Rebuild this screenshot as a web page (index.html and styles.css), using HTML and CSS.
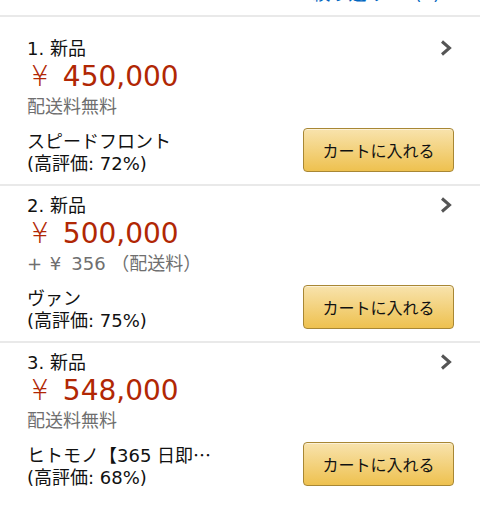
FILE: index.html
```html
<!DOCTYPE html>
<html lang="ja">
<head>
<meta charset="utf-8">
<title>出品一覧</title>
<link rel="stylesheet" href="styles.css">
</head>
<body>
<div class="page">
  <div class="header">
    <div class="filter"><span class="filter-label">絞り込み</span><span class="filter-count">(1)</span></div>
  </div>
  <ul class="offers">
    <li class="offer">
      <div class="offer-head">
        <span class="title">1. 新品</span>
        <svg class="chevron" width="12" height="18" viewBox="0 0 12 18"><polyline points="2,2.5 9.5,9 2,15.5" fill="none" stroke="#555" stroke-width="3"/></svg>
      </div>
      <div class="price"><span class="yen">¥</span>450,000</div>
      <div class="ship">配送料無料</div>
      <div class="seller-row">
        <div class="seller">
          <div class="seller-name">スピードフロント</div>
          <div class="rating">(高評価: 72%)</div>
        </div>
        <button class="cart">カートに入れる</button>
      </div>
    </li>
    <li class="offer">
      <div class="offer-head">
        <span class="title">2. 新品</span>
        <svg class="chevron" width="12" height="18" viewBox="0 0 12 18"><polyline points="2,2.5 9.5,9 2,15.5" fill="none" stroke="#555" stroke-width="3"/></svg>
      </div>
      <div class="price"><span class="yen">¥</span>500,000</div>
      <div class="ship">+ <span class="yen-small">¥</span>356 （配送料）</div>
      <div class="seller-row">
        <div class="seller">
          <div class="seller-name">ヴァン</div>
          <div class="rating">(高評価: 75%)</div>
        </div>
        <button class="cart">カートに入れる</button>
      </div>
    </li>
    <li class="offer">
      <div class="offer-head">
        <span class="title">3. 新品</span>
        <svg class="chevron" width="12" height="18" viewBox="0 0 12 18"><polyline points="2,2.5 9.5,9 2,15.5" fill="none" stroke="#555" stroke-width="3"/></svg>
      </div>
      <div class="price"><span class="yen">¥</span>548,000</div>
      <div class="ship">配送料無料</div>
      <div class="seller-row">
        <div class="seller">
          <div class="seller-name">ヒトモノ【365 日即<span class="cjk">…</span></div>
          <div class="rating">(高評価: 68%)</div>
        </div>
        <button class="cart">カートに入れる</button>
      </div>
    </li>
  </ul>
</div>
</body>
</html>
```

FILE: styles.css
```css
html, body {
  margin: 0;
  padding: 0;
  background: #fff;
}

body {
  font-family: "DejaVu Sans", "Noto Sans CJK JP", sans-serif;
  font-size: 18px;
  line-height: 22px;
  color: #111;
}

.page {
  width: 480px;
}

.header {
  height: 15px;
  overflow: hidden;
  border-bottom: 2px solid #e9e9e9;
}

.filter {
  display: flex;
  justify-content: flex-end;
  gap: 30px;
  margin-top: -17px;
  padding-right: 40px;
  color: #0066c0;
}

.offers {
  list-style: none;
  margin: 12px 0 0;
  padding: 0;
}

.offer {
  padding: 9px 26px 9px 27px;
}

.offer + .offer {
  border-top: 2px solid #e9e9e9;
}

.offer-head {
  display: flex;
  justify-content: space-between;
  align-items: flex-start;
  height: 22px;
}

.chevron {
  display: block;
  margin-top: 1px;
  margin-right: 2px;
}

.price {
  height: 34px;
  font-size: 28px;
  line-height: 34px;
  color: #b12704;
}

.yen {
  display: inline-block;
  padding-left: 4px;
  margin-right: 14px;
  font-weight: 300;
}

.yen-small {
  display: inline-block;
  padding-left: 2px;
  margin-right: 10px;
}

.cjk {
  font-family: "Noto Sans CJK JP", sans-serif;
  line-height: 1;
}

.ship {
  height: 22px;
  margin-top: 2px;
  color: #6f6f6f;
}

.seller-row {
  display: flex;
  justify-content: space-between;
  align-items: flex-start;
  margin-top: 13px;
}

.seller {
  min-width: 0;
}

.seller-name, .rating {
  height: 22px;
  white-space: nowrap;
}

.cart {
  width: 151px;
  height: 44px;
  margin-top: -3px;
  padding: 0;
  border: 1px solid #a88734;
  border-radius: 4px;
  background: linear-gradient(to bottom, #f8e3ad, #eec14f);
  box-shadow: inset 0 1px 0 rgba(255, 255, 255, 0.5);
  font-family: "Noto Sans CJK JP", sans-serif;
  font-size: 16px;
  color: #111;
}
```
